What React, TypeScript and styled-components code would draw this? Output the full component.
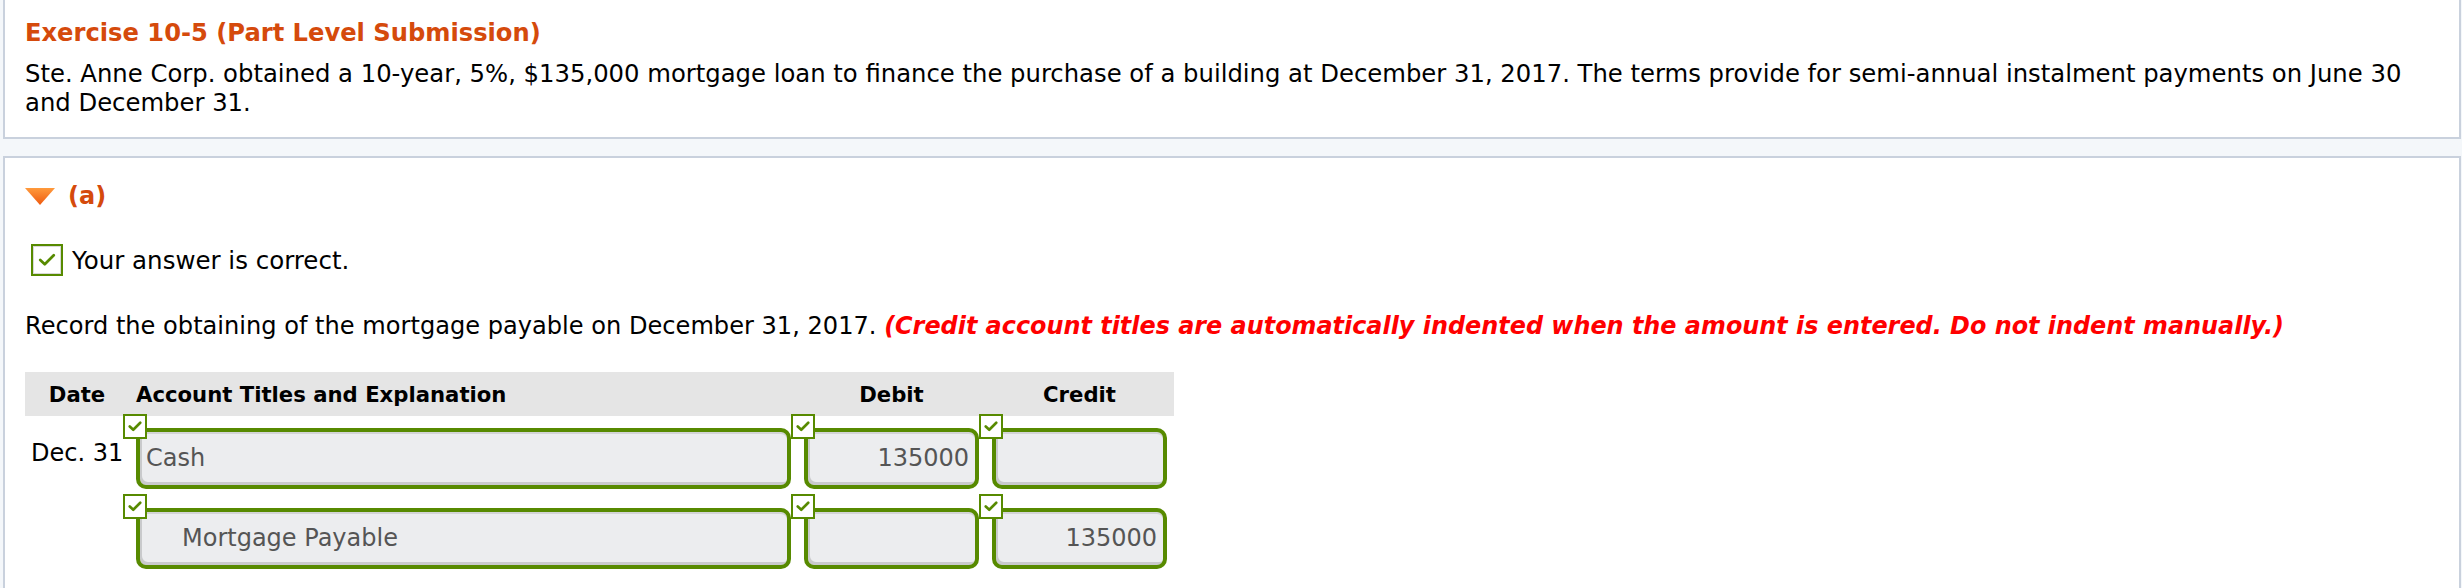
import React from "react";
import styled, { createGlobalStyle } from "styled-components";

const Global = createGlobalStyle`
  html, body { margin: 0; padding: 0; }
  body {
    background: #f4f7fa;
    font-family: "DejaVu Sans", Verdana, sans-serif;
    color: #000;
  }
`;

const Page = styled.div`
  padding: 0 1px 0 3px;
  display: flex;
  flex-direction: column;
  gap: 17px;
`;

const Panel = styled.section<{ $top?: boolean }>`
  background: #fff;
  border: 2px solid #c9d1dd;
  margin-top: ${(p) => (p.$top ? "-2px" : "0")};
  padding: ${(p) => (p.$top ? "19px 20px 20px 20px" : "24px 20px 40px 20px")};
`;

const Title = styled.h1`
  margin: 0;
  font-size: 24.2px;
  line-height: 29px;
  font-weight: bold;
  color: #d54a0c;
`;

const Body = styled.p`
  margin: 11px 0 0 0;
  font-size: 24.3px;
  line-height: 29px;
  padding-right: 30px;
`;

const PartHead = styled.div`
  display: flex;
  align-items: center;
  gap: 13px;
  font-size: 24px;
  line-height: 29px;
  font-weight: bold;
  color: #d54a0c;
`;

const Feedback = styled.div`
  margin-top: 33px;
  margin-left: 6px;
  display: flex;
  align-items: center;
  gap: 9px;
  font-size: 24.5px;
  line-height: 29px;
`;

const BigCheck = styled.span`
  width: 28px;
  height: 28px;
  border: 2px solid #578a00;
  box-shadow: inset 0 0 0 1px #d9d9d9;
  background: #fff;
  display: flex;
  align-items: center;
  justify-content: center;
`;

const Instruction = styled.p`
  margin: 36px 0 0 0;
  font-size: 24.1px;
  line-height: 29px;
`;

const Warn = styled.span`
  color: #ff0000;
  font-weight: bold;
  font-style: italic;
  font-size: 23.9px;
`;

const Table = styled.div`
  margin-top: 31px;
  width: 1149px;
  display: flex;
  flex-direction: column;
`;

const Grid = styled.div`
  display: grid;
  grid-template-columns: 98px 655px 175px 175px;
  column-gap: 13px;
  padding-right: 7px;
`;

const HeadRow = styled(Grid)`
  background: #e5e5e5;
  height: 44px;
  align-items: center;
  font-weight: bold;
  font-size: 21.2px;
`;

const HeadCell = styled.div<{ $align: "left" | "center" }>`
  text-align: ${(p) => p.$align};
`;

const DateHead = styled.div`
  text-align: center;
  padding-left: 6px;
`;

const BodyRow = styled(Grid)<{ $first?: boolean }>`
  margin-top: ${(p) => (p.$first ? "12px" : "19px")};
`;

const DateCell = styled.div`
  text-align: center;
  padding: 11px 0 0 6px;
  font-size: 24px;
  line-height: 29px;
  white-space: nowrap;
`;

const FieldWrap = styled.div`
  position: relative;
`;

const Field = styled.div<{ $align: "left" | "right"; $indent?: boolean }>`
  box-sizing: border-box;
  height: 61px;
  border: 4px solid #578a00;
  border-radius: 10px;
  background: #ecedef;
  box-shadow: inset 2px -3px 0 0 #c9cacc, inset 0 2px 0 0 #d3d4d6;
  display: flex;
  align-items: center;
  justify-content: ${(p) => (p.$align === "right" ? "flex-end" : "flex-start")};
  padding: 0 ${(p) => (p.$align === "right" ? "6px" : "0")} 2px
    ${(p) => (p.$indent ? "42px" : "6px")};
  font-size: 24px;
  color: #555;
`;

const Badge = styled.span`
  position: absolute;
  top: -14px;
  left: -13px;
  width: 20px;
  height: 21px;
  border: 2px solid #578a00;
  background: #fff;
  display: flex;
  align-items: center;
  justify-content: center;
  z-index: 1;
`;

const Tick = ({ size, weight = 2.4 }: { size: number; weight?: number }) => (
  <svg width={size} height={size * 0.75} viewBox="0 0 16 12">
    <path d="M2 6.2 L6 10 L14 2" fill="none" stroke="#578a00" strokeWidth={weight} strokeLinecap="round" strokeLinejoin="round" />
  </svg>
);

const Arrow = () => (
  <svg width="30" height="17" viewBox="0 0 30 17">
    <defs>
      <linearGradient id="tri" x1="0" y1="0" x2="0" y2="1">
        <stop offset="0" stopColor="#ff9a3c" />
        <stop offset="1" stopColor="#ee5a10" />
      </linearGradient>
    </defs>
    <polygon points="0,0 30,0 15,17" fill="url(#tri)" />
  </svg>
);

type Entry = { date?: string; account: string; indent?: boolean; debit?: string; credit?: string };

const entries: Entry[] = [
  { date: "Dec. 31", account: "Cash", debit: "135000" },
  { account: "Mortgage Payable", indent: true, credit: "135000" },
];

const Cell = ({ children, align, indent }: { children?: React.ReactNode; align: "left" | "right"; indent?: boolean }) => (
  <FieldWrap>
    <Badge>
      <Tick size={14} weight={3} />
    </Badge>
    <Field $align={align} $indent={indent}>{children}</Field>
  </FieldWrap>
);

export default function App() {
  return (
    <>
      <Global />
      <Page>
        <Panel $top>
          <Title>Exercise 10-5 (Part Level Submission)</Title>
          <Body>
            Ste. Anne Corp. obtained a 10-year, 5%, $135,000 mortgage loan to finance the purchase of a building at
            December 31, 2017. The terms provide for semi-annual instalment payments on June 30 and December 31.
          </Body>
        </Panel>
        <Panel>
          <PartHead>
            <Arrow />
            <span>(a)</span>
          </PartHead>
          <Feedback>
            <BigCheck>
              <Tick size={18} />
            </BigCheck>
            <span>Your answer is correct.</span>
          </Feedback>
          <Instruction>
            Record the obtaining of the mortgage payable on December 31, 2017.{" "}
            <Warn>
              (Credit account titles are automatically indented when the amount is entered. Do not indent manually.)
            </Warn>
          </Instruction>
          <Table>
            <HeadRow>
              <DateHead>Date</DateHead>
              <HeadCell $align="left">Account Titles and Explanation</HeadCell>
              <HeadCell $align="center">Debit</HeadCell>
              <HeadCell $align="center">Credit</HeadCell>
            </HeadRow>
            {entries.map((e, i) => (
              <BodyRow key={i} $first={i === 0}>
                <DateCell>{e.date ?? ""}</DateCell>
                <Cell align="left" indent={e.indent}>{e.account}</Cell>
                <Cell align="right">{e.debit ?? ""}</Cell>
                <Cell align="right">{e.credit ?? ""}</Cell>
              </BodyRow>
            ))}
          </Table>
        </Panel>
      </Page>
    </>
  );
}
